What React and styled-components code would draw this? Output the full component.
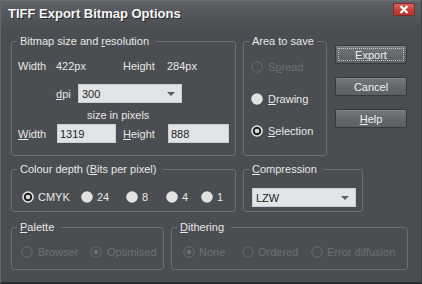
import React from "react";
import styled, { createGlobalStyle, css } from "styled-components";

const GlobalStyle = createGlobalStyle`
  body {
    margin: 0;
    background: #4a4d51;
    font-family: "Liberation Sans", Arial, sans-serif;
  }
`;

const Window = styled.div`
  width: 422px;
  height: 284px;
  box-sizing: border-box;
  background: #4a4d51;
  border-left: 1px solid #64676b;
  border-right: 1px solid #3e4144;
  border-bottom: 2px solid #2a2c2f;
  display: flex;
  flex-direction: column;
  color: #e8e8e8;
  font-size: 11px;
  overflow: hidden;
`;

const TitleBar = styled.div`
  height: 28px;
  flex: none;
  display: flex;
  align-items: flex-start;
  justify-content: space-between;
  padding: 0 6px 0 7px;
  background: linear-gradient(#5f6266, #54575b 45%, #4b4e52);
  border-top: 1px solid #6c6f73;
  box-sizing: border-box;
`;

const Title = styled.div`
  margin-top: 5px;
  font-size: 13px;
  line-height: 16px;
  font-weight: bold;
  color: #f6f6f6;
  text-shadow: 1px 1px 0 #2a2c2e;
`;

const CloseButton = styled.div`
  margin-top: 2px;
  width: 22px;
  height: 13px;
  box-sizing: border-box;
  border: 1px solid #7a2a26;
  border-radius: 2px;
  background: linear-gradient(#e0635b, #c8433b 50%, #b9342d);
  display: flex;
  align-items: center;
  justify-content: center;
`;

const Body = styled.div`
  padding: 7px 0 0 10px;
  display: flex;
  flex-direction: column;
`;

const Row = styled.div`
  display: flex;
  align-items: flex-start;
  gap: 7px;
  margin-top: ${(p) => p.$mt || 0}px;
`;

const Group = styled.fieldset`
  margin: 0;
  padding: 0;
  min-width: 0;
  width: ${(p) => p.$w}px;
  box-sizing: border-box;
  border: 1px solid #6b6e72;
  border-radius: 3px;
`;

const Legend = styled.legend`
  margin-left: 5px;
  padding: 0 ${(p) => (p.$tight ? 3 : 7)}px 0 3px;
  line-height: 13px;
  font-size: 11px;
  color: ${(p) => (p.$disabled ? "#e8e8e8" : "#e8e8e8")};
`;

const GroupContent = styled.div`
  height: ${(p) => p.$h}px;
  box-sizing: border-box;
  padding: ${(p) => p.$pt || 0}px 0 0 ${(p) => p.$pl || 0}px;
  display: flex;
  flex-direction: column;
  gap: ${(p) => p.$gap || 0}px;
`;

const Line = styled.div`
  display: flex;
  align-items: center;
  height: ${(p) => p.$h || 14}px;
  margin-top: ${(p) => p.$mt || 0}px;
  padding-left: ${(p) => p.$pl || 0}px;
`;

const Label = styled.span`
  width: ${(p) => p.$w}px;
  flex: none;
  white-space: nowrap;
`;

const Field = styled.div`
  width: ${(p) => p.$w}px;
  height: 19px;
  box-sizing: border-box;
  flex: none;
  background: #e1e4e7;
  border: 1px solid #c9ccd0;
  color: #1b1b1b;
  display: flex;
  align-items: center;
  justify-content: space-between;
  padding: 0 6px 0 ${(p) => p.$pl || 2}px;
`;

const Arrow = styled.span`
  width: 0;
  height: 0;
  border-left: 4px solid transparent;
  border-right: 4px solid transparent;
  border-top: 4px solid #5c5f62;
  margin-top: 1px;
`;

const RadioRow = styled.div`
  display: grid;
  grid-template-columns: ${(p) => p.$cols};
  margin-top: ${(p) => p.$mt || 0}px;
  padding-left: ${(p) => p.$pl || 0}px;
`;

const Option = styled.label`
  display: flex;
  align-items: center;
  gap: ${(p) => p.$gap || 4}px;
  height: 14px;
  white-space: nowrap;
  color: ${(p) => (p.$disabled ? "#6d7074" : "#e8e8e8")};
`;

const Buttons = styled.div`
  margin-top: 10px;
  margin-left: 1px;
  display: flex;
  flex-direction: column;
  gap: 13px;
`;

const Button = styled.div`
  width: 72px;
  height: 19px;
  box-sizing: border-box;
  border: 1px solid #36393c;
  border-radius: 2px;
  background: linear-gradient(#74777b, #65686c 50%, #5b5e62);
  box-shadow: inset 0 1px 0 #808387;
  color: #f0f0f0;
  display: flex;
  align-items: center;
  justify-content: center;
  position: relative;
  ${(p) =>
    p.$focus &&
    css`
      &::after {
        content: "";
        position: absolute;
        inset: 2px;
        border: 1px dotted #c8c8c8;
      }
    `}
`;

const Radio = ({ state }) => {
  if (state === "on")
    return (
      <svg width="12" height="12" viewBox="0 0 12 12">
        <circle cx="6" cy="6" r="5.8" fill="#e6e6e6" />
        <circle cx="6" cy="6" r="3.3" fill="#d8d8d8" stroke="#1c1c1c" strokeWidth="1.9" />
      </svg>
    );
  if (state === "off")
    return (
      <svg width="12" height="12" viewBox="0 0 12 12">
        <circle cx="6" cy="6" r="5.8" fill="#e2e2e2" />
      </svg>
    );
  return (
    <svg width="12" height="12" viewBox="0 0 12 12">
      <circle cx="6" cy="6" r="5.2" fill="none" stroke="#686b6f" strokeWidth="1" />
      {state === "disabledOn" && <circle cx="6" cy="6" r="2.4" fill="#686b6f" />}
    </svg>
  );
};

const Select = ({ value, w }) => (
  <Field $w={w} $pl={3}>
    <span>{value}</span>
    <Arrow />
  </Field>
);

export default function App() {
  return (
    <>
      <GlobalStyle />
      <Window>
        <TitleBar>
          <Title>TIFF Export Bitmap Options</Title>
          <CloseButton>
            <svg width="10" height="9" viewBox="0 0 10 9">
              <path d="M1.5 1 L8.5 8 M8.5 1 L1.5 8" stroke="#ffffff" strokeWidth="2.2" />
            </svg>
          </CloseButton>
        </TitleBar>
        <Body>
          <Row>
            <Group $w={225}>
              <Legend>
                Bitmap size and <u>r</u>esolution
              </Legend>
              <GroupContent $h={107}>
                <Line $mt={11} $pl={6}>
                  <Label $w={38}>Width</Label>
                  <Label $w={67}>422px</Label>
                  <Label $w={44}>Height</Label>
                  <Label $w={50}>284px</Label>
                </Line>
                <Line $mt={11} $h={19} $pl={44}>
                  <Label $w={22}>
                    <u>d</u>pi
                  </Label>
                  <Select value="300" w={104} />
                </Line>
                <Line $mt={5} $pl={75}>
                  size in pixels
                </Line>
                <Line $mt={2} $h={19} $pl={6}>
                  <Label $w={39}>
                    <u>W</u>idth
                  </Label>
                  <Field $w={59}>1319</Field>
                  <Label $w={45} style={{ marginLeft: 7 }}>
                    <u>H</u>eight
                  </Label>
                  <Field $w={61}>888</Field>
                </Line>
              </GroupContent>
            </Group>
            <Group $w={84}>
              <Legend $tight>Area to save</Legend>
              <GroupContent $h={107} $pt={12} $pl={7} $gap={18}>
                <Option $disabled $gap={5}>
                  <Radio state="disabled" />
                  <span>
                    S<u>p</u>read
                  </span>
                </Option>
                <Option $gap={5}>
                  <Radio state="off" />
                  <span>
                    <u>D</u>rawing
                  </span>
                </Option>
                <Option $gap={5}>
                  <Radio state="on" />
                  <span>
                    <u>S</u>election
                  </span>
                </Option>
              </GroupContent>
            </Group>
            <Buttons>
              <Button $focus>Export</Button>
              <Button>Cancel</Button>
              <Button>
                <span>
                  <u>H</u>elp
                </span>
              </Button>
            </Buttons>
          </Row>
          <Row $mt={7}>
            <Group $w={225}>
              <Legend>
                Colour depth (<u>B</u>its per pixel)
              </Legend>
              <GroupContent $h={35}>
                <RadioRow $cols="59px 45px 40px 35px auto" $mt={14} $pl={10}>
                  <Option>
                    <Radio state="on" />
                    CMYK
                  </Option>
                  <Option>
                    <Radio state="off" />
                    24
                  </Option>
                  <Option>
                    <Radio state="off" />8
                  </Option>
                  <Option>
                    <Radio state="off" />4
                  </Option>
                  <Option>
                    <Radio state="off" />1
                  </Option>
                </RadioRow>
              </GroupContent>
            </Group>
            <Group $w={120}>
              <Legend>
                <u>C</u>ompression
              </Legend>
              <GroupContent $h={35} $pt={12} $pl={8}>
                <Select value="LZW" w={104} />
              </GroupContent>
            </Group>
          </Row>
          <Row $mt={9}>
            <Group $w={153}>
              <Legend>
                <u>P</u>alette
              </Legend>
              <GroupContent $h={35}>
                <RadioRow $cols="69px auto" $mt={11} $pl={9}>
                  <Option $disabled $gap={5}>
                    <Radio state="disabled" />
                    Browser
                  </Option>
                  <Option $disabled $gap={5}>
                    <Radio state="disabledOn" />
                    Optimised
                  </Option>
                </RadioRow>
              </GroupContent>
            </Group>
            <Group $w={237}>
              <Legend>
                <u>D</u>ithering
              </Legend>
              <GroupContent $h={35}>
                <RadioRow $cols="59px 69px auto" $mt={11} $pl={11}>
                  <Option $disabled>
                    <Radio state="disabledOn" />
                    None
                  </Option>
                  <Option $disabled>
                    <Radio state="disabled" />
                    Ordered
                  </Option>
                  <Option $disabled>
                    <Radio state="disabled" />
                    Error diffusion
                  </Option>
                </RadioRow>
              </GroupContent>
            </Group>
          </Row>
        </Body>
      </Window>
    </>
  );
}
